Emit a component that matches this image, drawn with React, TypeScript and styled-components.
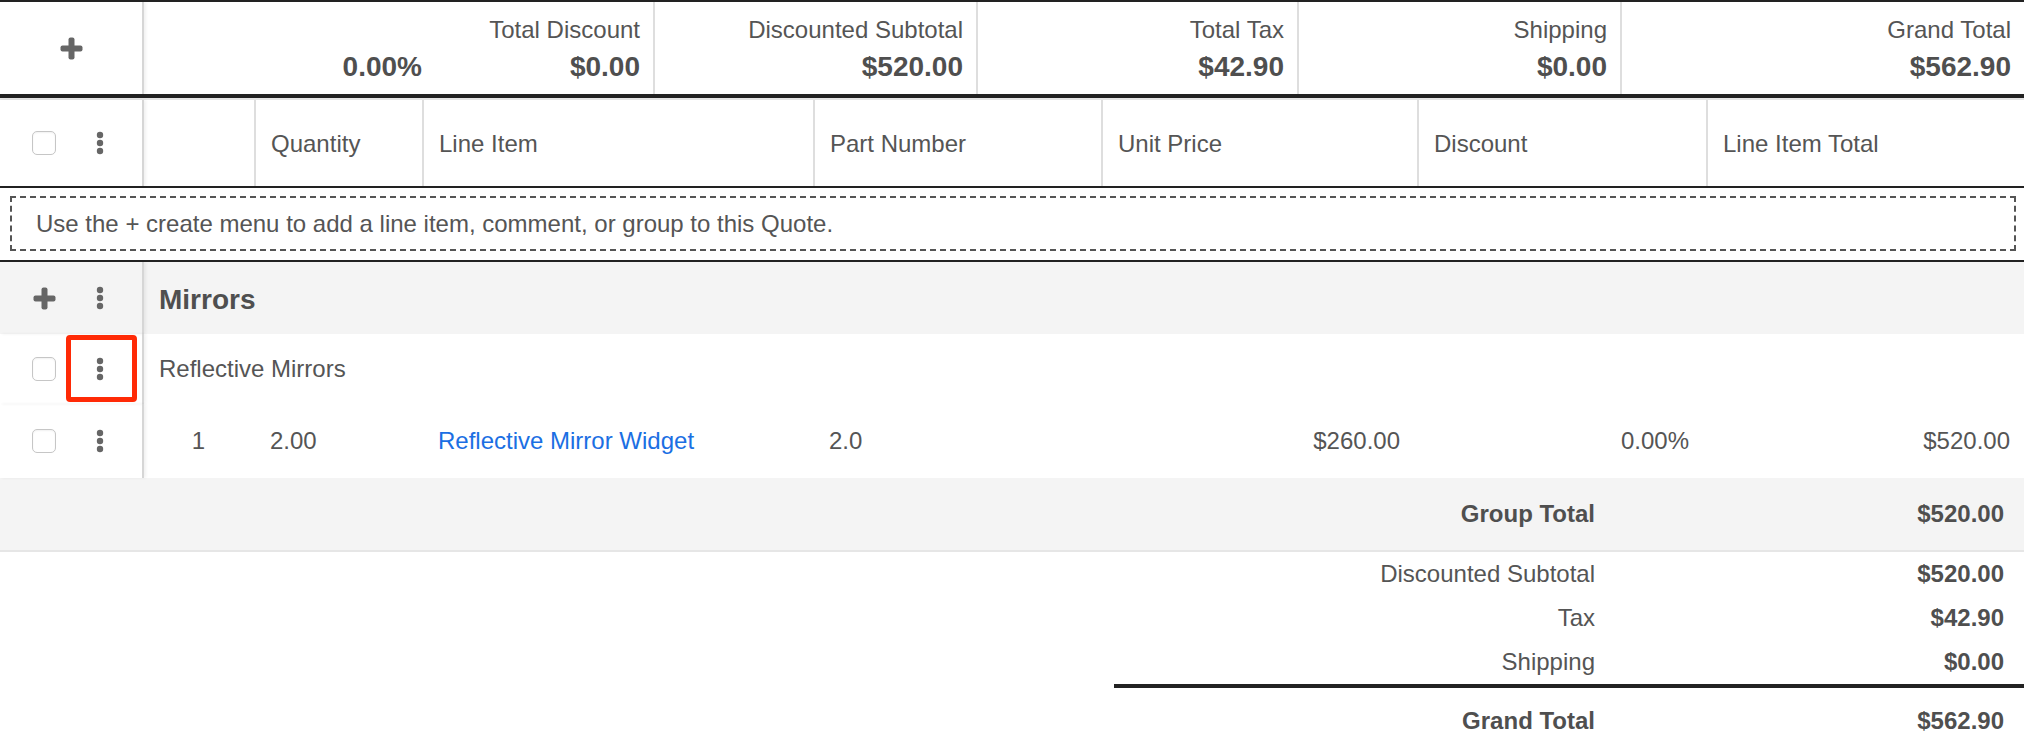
import styled, { createGlobalStyle } from "styled-components";

const GlobalStyle = createGlobalStyle`
  html, body {
    margin: 0;
    padding: 0;
    background: #fff;
  }
  body {
    font-family: "Liberation Sans", Arial, sans-serif;
    font-size: 24px;
    color: #555;
  }
  * {
    box-sizing: border-box;
  }
`;

// column grid shared by the header, group and line item rows
const COLUMNS = "144px 110px 168px 391px 288px 316px 289px 1fr";

const lineItems = [
  {
    index: "1",
    quantity: "2.00",
    name: "Reflective Mirror Widget",
    part: "2.0",
    price: "$260.00",
    discount: "0.00%",
    total: "$520.00",
  },
];

const headers = [
  "Quantity",
  "Line Item",
  "Part Number",
  "Unit Price",
  "Discount",
  "Line Item Total",
];

function PlusIcon() {
  return (
    <svg width="23" height="23" viewBox="0 0 23 23">
      <rect x="8.5" y="0.5" width="6" height="22" rx="2" fill="#666" />
      <rect x="0.5" y="8.5" width="22" height="6" rx="2" fill="#666" />
    </svg>
  );
}

function KebabIcon() {
  return (
    <svg width="8" height="24" viewBox="0 0 8 24">
      <circle cx="4" cy="4" r="3.2" fill="#666" />
      <circle cx="4" cy="12" r="3.2" fill="#666" />
      <circle cx="4" cy="20" r="3.2" fill="#666" />
    </svg>
  );
}

export default function App() {
  return (
    <>
      <GlobalStyle />
      <Sheet>
        <TotalsBar>
          <Gutter $center>
            <PlusIcon />
          </Gutter>
          <TotalBlock $w={291}>
            <TotalLabel>&nbsp;</TotalLabel>
            <TotalValue>0.00%</TotalValue>
          </TotalBlock>
          <TotalBlock $w={218}>
            <TotalLabel>Total Discount</TotalLabel>
            <TotalValue>$0.00</TotalValue>
          </TotalBlock>
          <TotalBlock $w={323} $divider>
            <TotalLabel>Discounted Subtotal</TotalLabel>
            <TotalValue>$520.00</TotalValue>
          </TotalBlock>
          <TotalBlock $w={321} $divider>
            <TotalLabel>Total Tax</TotalLabel>
            <TotalValue>$42.90</TotalValue>
          </TotalBlock>
          <TotalBlock $w={323} $divider>
            <TotalLabel>Shipping</TotalLabel>
            <TotalValue>$0.00</TotalValue>
          </TotalBlock>
          <TotalBlock $divider>
            <TotalLabel>Grand Total</TotalLabel>
            <TotalValue>$562.90</TotalValue>
          </TotalBlock>
        </TotalsBar>

        <HeaderRow>
          <Gutter>
            <Checkbox />
            <KebabSlot>
              <KebabIcon />
            </KebabSlot>
          </Gutter>
          <HeadCell />
          {headers.map((h) => (
            <HeadCell key={h} $divider>
              {h}
            </HeadCell>
          ))}
        </HeaderRow>

        <NoticeRow>
          <Notice>
            Use the + create menu to add a line item, comment, or group to this
            Quote.
          </Notice>
        </NoticeRow>

        <Row $h={72} $bg="#f4f4f4">
          <Gutter>
            <IconSlot>
              <PlusIcon />
            </IconSlot>
            <KebabSlot>
              <KebabIcon />
            </KebabSlot>
          </Gutter>
          <GroupName>Mirrors</GroupName>
        </Row>

        <Row $h={70}>
          <Gutter>
            <Checkbox />
            <KebabSlot>
              <KebabIcon />
              <Highlight />
            </KebabSlot>
          </Gutter>
          <Comment>Reflective Mirrors</Comment>
        </Row>

        {lineItems.map((item) => (
          <Row $h={74} key={item.index}>
            <Gutter>
              <Checkbox />
              <KebabSlot>
                <KebabIcon />
              </KebabSlot>
            </Gutter>
            <Cell $align="center">{item.index}</Cell>
            <Cell>{item.quantity}</Cell>
            <Cell>
              <ItemLink>{item.name}</ItemLink>
            </Cell>
            <Cell>{item.part}</Cell>
            <Cell $align="right">{item.price}</Cell>
            <Cell $align="right">{item.discount}</Cell>
            <Cell $align="right" $last>
              {item.total}
            </Cell>
          </Row>
        ))}

        <GroupTotalBand>
          <SumRow $h={72}>
            <SumLabel $bold>Group Total</SumLabel>
            <SumValue>$520.00</SumValue>
          </SumRow>
        </GroupTotalBand>

        <Summary>
          <SumRow $h={44}>
            <SumLabel>Discounted Subtotal</SumLabel>
            <SumValue>$520.00</SumValue>
          </SumRow>
          <SumRow $h={44}>
            <SumLabel>Tax</SumLabel>
            <SumValue>$42.90</SumValue>
          </SumRow>
          <SumRow $h={44}>
            <SumLabel>Shipping</SumLabel>
            <SumValue>$0.00</SumValue>
          </SumRow>
          <Rule />
          <SumRow $h={66}>
            <SumLabel $bold>Grand Total</SumLabel>
            <SumValue>$562.90</SumValue>
          </SumRow>
        </Summary>
      </Sheet>
    </>
  );
}

const Sheet = styled.div`
  width: 2024px;
  border-top: 2px solid #222;
  overflow: hidden;
`;

const Gutter = styled.div<{ $center?: boolean }>`
  flex: none;
  width: 144px;
  display: flex;
  align-items: center;
  justify-content: ${(p) => (p.$center ? "center" : "flex-start")};
  padding-left: ${(p) => (p.$center ? "0" : "32px")};
  gap: 34px;
  border-right: 2px solid #d6d6d6;
  box-shadow: 2px 0 3px rgba(0, 0, 0, 0.06);
  position: relative;
  z-index: 1;
`;

const TotalsBar = styled.div`
  display: flex;
  height: 96px;
  border-bottom: 4px solid #222;
`;

const TotalBlock = styled.div<{ $w?: number; $divider?: boolean }>`
  flex: ${(p) => (p.$w ? `none` : "1")};
  width: ${(p) => (p.$w ? `${p.$w}px` : "auto")};
  display: flex;
  flex-direction: column;
  justify-content: center;
  align-items: flex-end;
  gap: 8px;
  padding: 2px 13px 0 0;
  border-left: ${(p) => (p.$divider ? "2px solid #dedede" : "none")};
  white-space: nowrap;
`;

const TotalLabel = styled.div`
  font-size: 24px;
  line-height: 28px;
`;

const TotalValue = styled.div`
  font-size: 28px;
  font-weight: 700;
  line-height: 30px;
  color: #4f4f4f;
`;

const Row = styled.div<{ $h: number; $bg?: string }>`
  display: grid;
  grid-template-columns: ${COLUMNS};
  height: ${(p) => p.$h}px;
  background: ${(p) => p.$bg || "#fff"};
`;

const HeaderRow = styled(Row).attrs({ $h: 90 })`
  border-top: 2px solid #e4e4e4;
  border-bottom: 2px solid #222;
`;

const HeadCell = styled.div<{ $divider?: boolean }>`
  display: flex;
  align-items: center;
  padding: 2px 15px 0;
  border-left: ${(p) => (p.$divider ? "2px solid #dedede" : "none")};
  white-space: nowrap;
`;

const Checkbox = styled.span`
  flex: none;
  width: 24px;
  height: 24px;
  border: 1.5px solid #c6c6c6;
  border-radius: 5px;
  background: #fff;
  box-shadow: inset 0 1px 2px rgba(0, 0, 0, 0.06);
`;

const IconSlot = styled.span`
  flex: none;
  width: 24px;
  display: flex;
  justify-content: center;
`;

const KebabSlot = styled.span`
  flex: none;
  width: 20px;
  height: 24px;
  display: flex;
  justify-content: center;
  position: relative;
`;

// red annotation frame drawn over the row menu
const Highlight = styled.span`
  position: absolute;
  top: -22px;
  bottom: -21px;
  left: -24px;
  right: -27px;
  border: 5px solid #ff2a06;
  border-radius: 4px;
`;

const NoticeRow = styled.div`
  height: 74px;
  padding: 8px 8px 9px 10px;
  border-bottom: 2px solid #222;
`;

const Notice = styled.div`
  height: 100%;
  display: flex;
  align-items: center;
  padding-left: 24px;
  border: 2px dashed #555;
`;

const GroupName = styled.div`
  grid-column: 2 / -1;
  display: flex;
  align-items: center;
  padding: 4px 0 0 15px;
  font-size: 28px;
  font-weight: 700;
  color: #4f4f4f;
`;

const Comment = styled.div`
  grid-column: 2 / -1;
  display: flex;
  align-items: center;
  padding-left: 15px;
`;

const Cell = styled.div<{ $align?: "left" | "center" | "right"; $last?: boolean }>`
  display: flex;
  align-items: center;
  justify-content: ${(p) =>
    p.$align === "right"
      ? "flex-end"
      : p.$align === "center"
      ? "center"
      : "flex-start"};
  padding: 0 ${(p) => (p.$last ? "14px" : "17px")} 0 16px;
  white-space: nowrap;
`;

const ItemLink = styled.a`
  color: #1b6fe3;
  text-decoration: none;
  cursor: pointer;
`;

const GroupTotalBand = styled.div`
  height: 74px;
  display: flex;
  justify-content: flex-end;
  background: #f4f4f4;
  border-bottom: 2px solid #e6e6e6;
`;

const Summary = styled.div`
  width: 910px;
  margin-left: auto;
`;

const SumRow = styled.div<{ $h: number }>`
  width: 910px;
  height: ${(p) => p.$h}px;
  display: grid;
  grid-template-columns: 481px 1fr;
  align-items: center;
`;

const SumLabel = styled.div<{ $bold?: boolean }>`
  text-align: right;
  font-weight: ${(p) => (p.$bold ? 700 : 400)};
  color: ${(p) => (p.$bold ? "#4f4f4f" : "#555")};
`;

const SumValue = styled.div`
  text-align: right;
  padding-right: 20px;
  font-weight: 700;
  color: #4f4f4f;
`;

const Rule = styled.div`
  height: 4px;
  background: #222;
`;
